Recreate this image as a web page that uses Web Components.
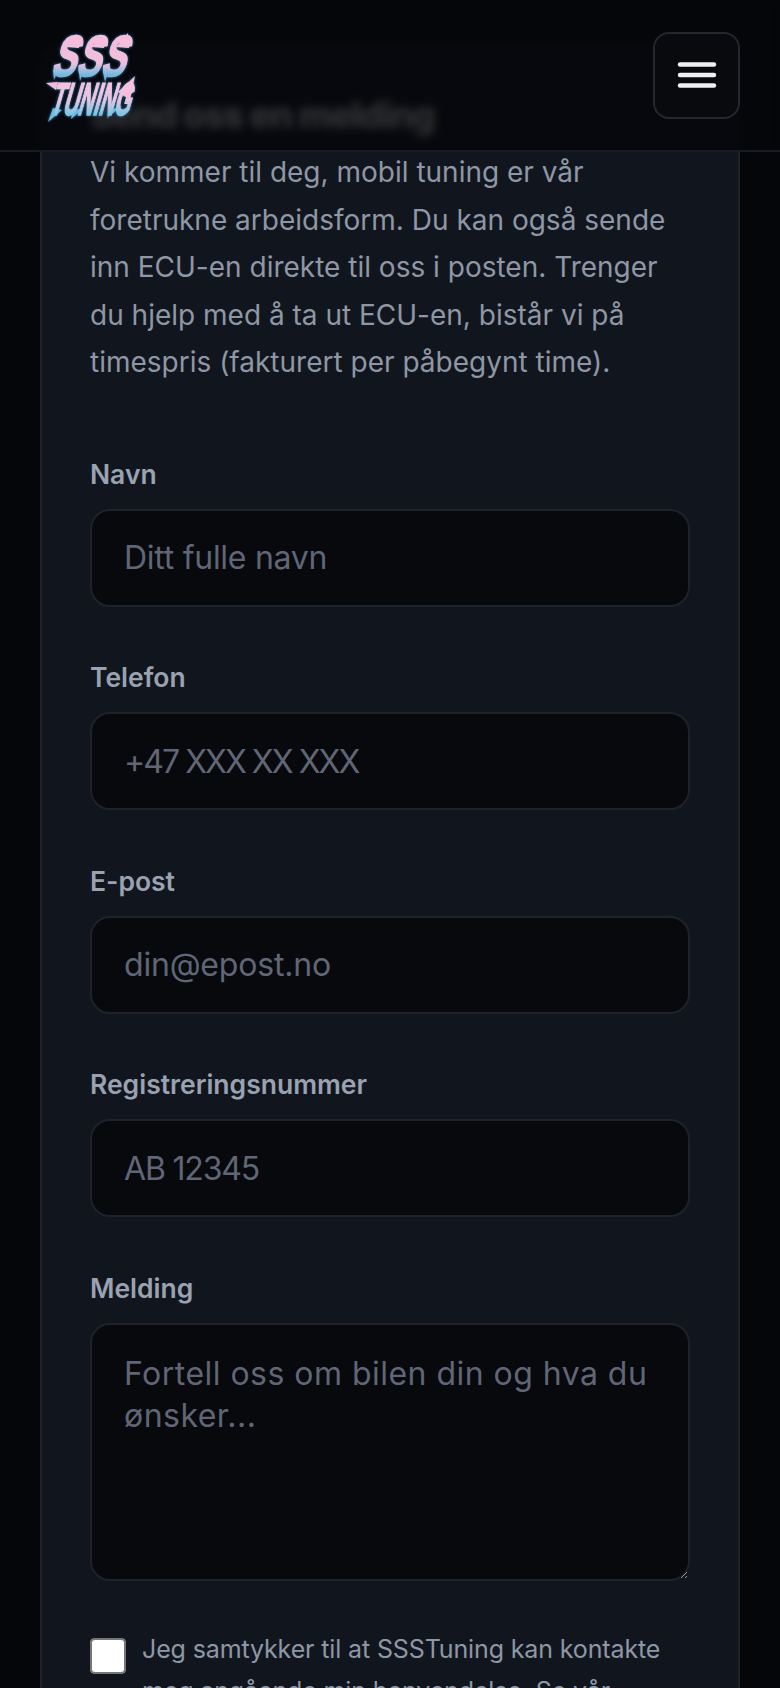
<!DOCTYPE html>
<html lang="no">
<head>
<meta charset="utf-8">
<title>SSSTuning</title>
<style>
    html, body { margin: 0; height: 1688px; overflow: hidden; background: #050609; }
    body { font-family: "Inter", "Noto Sans", sans-serif; }
</style>
</head>
<body>
<site-header></site-header>
<contact-card>
    <span slot="title">Send oss en melding</span>
    <span slot="intro">Vi kommer til deg, mobil tuning er vår foretrukne arbeidsform. Du kan også sende inn ECU-en direkte til oss i posten. Trenger du hjelp med å ta ut ECU-en, bistår vi på timespris (fakturert per påbegynt time).</span>
    <form-field label="Navn" placeholder="Ditt fulle navn" style="--ph-spacing: -0.27px"></form-field>
    <form-field label="Telefon" placeholder="+47 XXX XX XXX" style="--ph-spacing: -1.95px"></form-field>
    <form-field label="E-post" placeholder="din@epost.no" style="--ph-spacing: -0.2px"></form-field>
    <form-field label="Registreringsnummer" placeholder="AB 12345" style="--ph-spacing: -1.17px"></form-field>
    <form-field label="Melding" placeholder="Fortell oss om bilen din og hva du ønsker..." multiline style="--ph-spacing: 0.47px"></form-field>
    <consent-check>Jeg samtykker til at SSSTuning kan kontakte meg angående min henvendelse. Se vår</consent-check>
</contact-card>

<script>
class SiteHeader extends HTMLElement {
    constructor() {
        super();
        this.attachShadow({ mode: 'open' });
    }

    connectedCallback() {
        this.shadowRoot.innerHTML = `
            <style>
                :host {
                    position: absolute;
                    top: 0;
                    left: 0;
                    width: 100%;
                    height: 152px;
                    z-index: 10;
                    box-sizing: border-box;
                    display: flex;
                    align-items: center;
                    justify-content: space-between;
                    padding: 0 40px 0 42px;
                    background: rgba(5, 6, 10, 0.83);
                    backdrop-filter: blur(4px);
                    border-bottom: 2px solid #181b21;
                }
                .logo {
                    display: block;
                    width: 100px;
                    height: 100px;
                    margin-top: 1px;
                    overflow: visible;
                    filter: drop-shadow(0 0 1.5px #2f7fb4);
                }
                .logo text { font-family: "Liberation Sans", sans-serif; font-weight: 700; }
                .toggle {
                    width: 87px;
                    height: 87px;
                    box-sizing: border-box;
                    background: #090a0e;
                    border: 2px solid #24272d;
                    border-radius: 16px;
                    display: flex;
                    align-items: center;
                    justify-content: center;
                    padding: 0;
                }
            </style>
            <svg class="logo" viewBox="0 0 100 100" aria-label="SSS Tuning">
                <defs>
                    <linearGradient id="sss" x1="0" y1="0" x2="0" y2="1">
                        <stop offset="0" stop-color="#f8bcdb"/>
                        <stop offset=".62" stop-color="#efbfdc"/>
                        <stop offset=".8" stop-color="#6db8de"/>
                        <stop offset="1" stop-color="#6db8de"/>
                    </linearGradient>
                    <linearGradient id="tuning" x1="0" y1="0" x2="0" y2="1">
                        <stop offset="0" stop-color="#f8c2de"/>
                        <stop offset=".52" stop-color="#eac4e0"/>
                        <stop offset=".8" stop-color="#79c6e4"/>
                        <stop offset="1" stop-color="#79c6e4"/>
                    </linearGradient>
                </defs>
                <g fill="#f6bcda">
                    <polygon points="24,21 35,8 37,22"/>
                    <polygon points="49,21 60,9 62,22"/>
                    <polygon points="74,21 86,7 87,22"/>
                    <polygon points="76,66 93,50 88,74"/>
                    <polygon points="4,57 16,56 14,64"/>
                </g>
                <g fill="#6db8de">
                    <polygon points="11,44 17,42 12,54"/>
                    <polygon points="37,46 42,44 38,55"/>
                    <polygon points="61,46 67,44 63,56"/>
                    <polygon points="11,82 6,96 20,84"/>
                    <polygon points="31,82 29,93 40,84"/>
                    <polygon points="68,84 65,92 80,80"/>
                </g>
                <g stroke-width="1.6" stroke-linejoin="miter">
                    <text transform="translate(8 50) skewX(-18)" font-size="58" textLength="74" lengthAdjust="spacingAndGlyphs" fill="url(#sss)" stroke="url(#sss)">SSS</text>
                    <text transform="translate(7 89) skewX(-16)" font-size="46" textLength="80" lengthAdjust="spacingAndGlyphs" fill="url(#tuning)" stroke="url(#tuning)">TUNING</text>
                </g>
            </svg>
            <button class="toggle" aria-label="Meny">
                <svg width="48" height="48" viewBox="0 0 48 48" fill="none" stroke="#eef0f4" stroke-width="4.4" stroke-linecap="round">
                    <line x1="7" y1="13.5" x2="41" y2="13.5"/>
                    <line x1="7" y1="24" x2="41" y2="24"/>
                    <line x1="7" y1="34.5" x2="41" y2="34.5"/>
                </svg>
            </button>
        `;
    }
}

class ContactCard extends HTMLElement {
    constructor() {
        super();
        this.attachShadow({ mode: 'open' });
    }

    connectedCallback() {
        this.shadowRoot.innerHTML = `
            <style>
                :host {
                    display: block;
                    box-sizing: border-box;
                    width: 700px;
                    margin: 43px 0 0 40px;
                    padding: 48px;
                    background: #11161e;
                    border: 2px solid #1e2229;
                    border-radius: 24px;
                }
                h2 {
                    margin: 0 0 12px;
                    color: #ffffff;
                    font-size: 36px;
                    line-height: 44px;
                    font-weight: 800;
                    letter-spacing: -1.2px;
                }
                p {
                    margin: 0 0 65px;
                    color: #8f96a5;
                    font-size: 28px;
                    line-height: 47.6px;
                }
                .fields { display: flex; flex-direction: column; gap: 48.5px; }
            </style>
            <h2><slot name="title"></slot></h2>
            <p><slot name="intro"></slot></p>
            <div class="fields"><slot></slot></div>
        `;
    }
}

class FormField extends HTMLElement {
    constructor() {
        super();
        this.attachShadow({ mode: 'open' });
    }

    connectedCallback() {
        const label = this.getAttribute('label');
        const placeholder = this.getAttribute('placeholder');
        const control = this.hasAttribute('multiline')
            ? `<textarea placeholder="${placeholder}" rows="5"></textarea>`
            : `<input type="text" placeholder="${placeholder}">`;
        this.shadowRoot.innerHTML = `
            <style>
                :host { display: flex; flex-direction: column; gap: 13px; }
                label {
                    color: #9aa2b1;
                    font-size: 26.5px;
                    line-height: 44px;
                    font-weight: 600;
                }
                input, textarea {
                    box-sizing: border-box;
                    width: 100%;
                    height: 98px;
                    margin: 0;
                    padding: 32px;
                    display: block;
                    background: #07090d;
                    border: 2px solid #1e2229;
                    border-radius: 20px;
                    outline: none;
                    color: #f2f3f5;
                    font-family: inherit;
                    font-size: 32px;
                    line-height: 41.6px;
                    letter-spacing: var(--ph-spacing, 0);
                }
                textarea { height: 258px; resize: vertical; padding-top: 28px; }
                ::placeholder { color: #606676; opacity: 1; }
            </style>
            <label>${label}</label>
            ${control}
        `;
    }
}

class ConsentCheck extends HTMLElement {
    constructor() {
        super();
        this.attachShadow({ mode: 'open' });
    }

    connectedCallback() {
        this.shadowRoot.innerHTML = `
            <style>
                :host {
                    display: flex;
                    gap: 16px;
                    align-items: flex-start;
                    color: #8f96a5;
                    font-size: 25px;
                    line-height: 41.6px;
                    letter-spacing: -0.13px;
                }
                input { zoom: 2; width: 18px; height: 18px; margin: 4.5px 0 0; flex: none; }
                span { display: block; }
            </style>
            <input type="checkbox">
            <span><slot></slot></span>
        `;
    }
}

customElements.define('site-header', SiteHeader);
customElements.define('contact-card', ContactCard);
customElements.define('form-field', FormField);
customElements.define('consent-check', ConsentCheck);
</script>
</body>
</html>
